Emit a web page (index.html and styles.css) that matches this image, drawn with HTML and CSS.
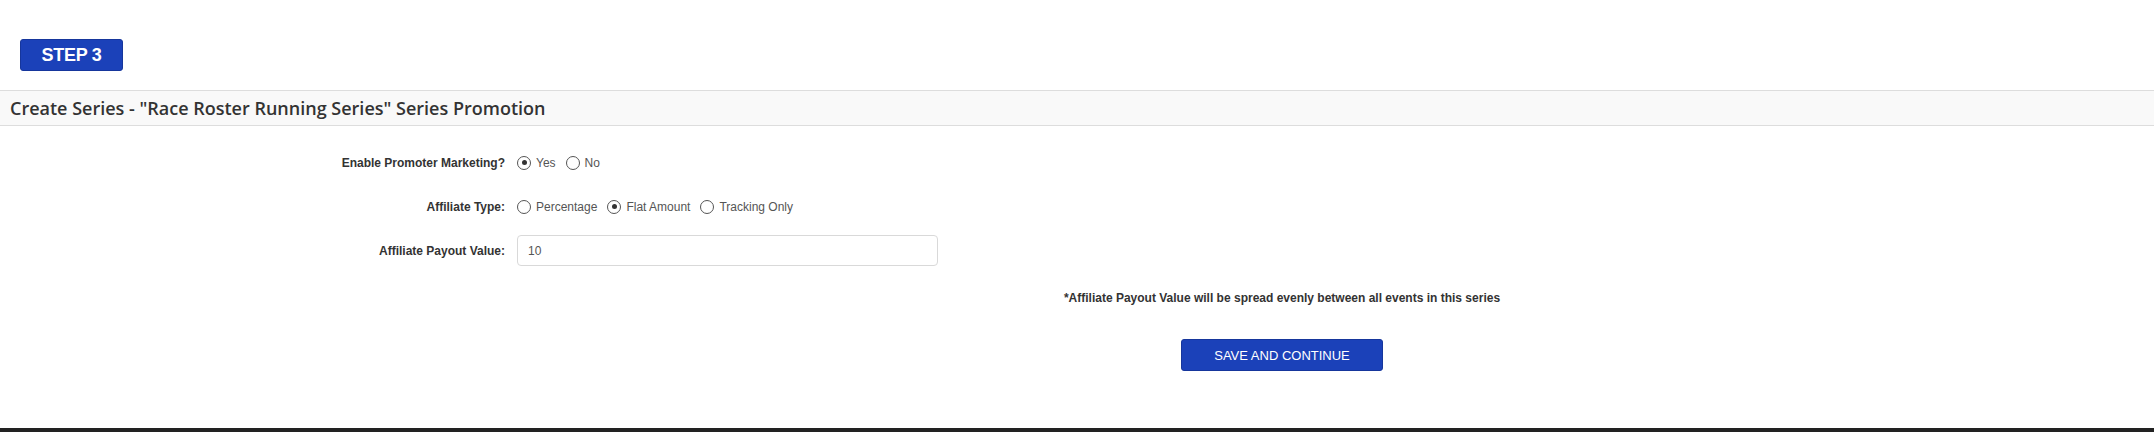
FILE: index.html
```html
<!DOCTYPE html>
<html lang="en">
<head>
<meta charset="utf-8">
<title>Create Series - Step 3</title>
<link rel="stylesheet" href="styles.css">
</head>
<body>
<div class="page">
  <div class="step-bar">
    <span class="step-badge">STEP 3</span>
  </div>
  <div class="section-head">
    <h2 class="section-title">Create Series - "Race Roster Running Series" Series Promotion</h2>
  </div>
  <form class="promo-form">
    <div class="form-row">
      <label class="form-label">Enable Promoter Marketing?</label>
      <div class="form-control-group">
        <label class="radio-opt"><span class="radio checked"></span>Yes</label>
        <label class="radio-opt"><span class="radio"></span>No</label>
      </div>
    </div>
    <div class="form-row">
      <label class="form-label">Affiliate Type:</label>
      <div class="form-control-group">
        <label class="radio-opt"><span class="radio"></span>Percentage</label>
        <label class="radio-opt"><span class="radio checked"></span>Flat Amount</label>
        <label class="radio-opt"><span class="radio"></span>Tracking Only</label>
      </div>
    </div>
    <div class="form-row">
      <label class="form-label">Affiliate Payout Value:</label>
      <div class="form-control-group">
        <div class="text-input">10</div>
      </div>
    </div>
    <div class="form-footer">
      <p class="note">*Affiliate Payout Value will be spread evenly between all events in this series</p>
      <button type="button" class="save-btn">SAVE AND CONTINUE</button>
    </div>
  </form>
</div>
<div class="footer-bar"></div>
</body>
</html>
```
FILE: styles.css
```css
html, body {
  margin: 0;
  padding: 0;
  background: #ffffff;
}

body {
  font-family: "Liberation Sans", Arial, sans-serif;
  color: #333333;
}

.page {
  height: 428px;
  background: #ffffff;
  overflow: hidden;
}

.step-bar {
  padding: 39px 0 0 20px;
  height: 52px;
  box-sizing: border-box;
}

.step-badge {
  display: inline-flex;
  align-items: center;
  justify-content: center;
  width: 103px;
  height: 32px;
  box-sizing: border-box;
  background: #1b41b9;
  border: 1px solid #16369c;
  border-radius: 3px;
  color: #ffffff;
  font-weight: bold;
  font-size: 18px;
  letter-spacing: -0.3px;
}

.section-head {
  margin-top: 38px;
  height: 36px;
  box-sizing: border-box;
  border-top: 1px solid #dddddd;
  border-bottom: 1px solid #dddddd;
  background: #f9f9f9;
  display: flex;
  align-items: center;
  padding-left: 10px;
}

.section-title {
  margin: 0;
  font-family: "Open Sans", "Liberation Sans", sans-serif;
  font-weight: 600;
  font-size: 18px;
  color: #333333;
}

.promo-form {
  padding-top: 21px;
  display: flex;
  flex-direction: column;
  gap: 13px;
}

.form-row {
  display: grid;
  grid-template-columns: 505px 1fr;
  column-gap: 12px;
  align-items: center;
  height: 31px;
}

.form-label {
  text-align: right;
  font-weight: bold;
  font-size: 12px;
  color: #333333;
}

.form-control-group {
  display: flex;
  align-items: center;
  gap: 10px;
}

.radio-opt {
  display: inline-flex;
  align-items: center;
  gap: 5px;
  font-size: 12px;
  color: #555555;
}

.radio {
  width: 14px;
  height: 14px;
  box-sizing: border-box;
  border: 1.5px solid #555555;
  border-radius: 50%;
  background: #ffffff;
  display: inline-flex;
  align-items: center;
  justify-content: center;
}

.radio.checked::after {
  content: "";
  width: 5px;
  height: 5px;
  border-radius: 50%;
  background: #333333;
}

.text-input {
  width: 421px;
  height: 31px;
  box-sizing: border-box;
  border: 1px solid #d9d9d9;
  border-radius: 4px;
  padding: 0 10px;
  display: flex;
  align-items: center;
  font-size: 12px;
  color: #555555;
}

.form-footer {
  padding-left: 410px;
  display: flex;
  flex-direction: column;
  align-items: center;
}

.note {
  margin: 12px 0 0 0;
  font-size: 12px;
  font-weight: bold;
  color: #333333;
}

.save-btn {
  margin-top: 34px;
  width: 202px;
  height: 32px;
  background: #1b41b9;
  border: 1px solid #16369c;
  border-radius: 3px;
  color: #ffffff;
  font-family: "Liberation Sans", Arial, sans-serif;
  font-size: 13px;
  padding: 0;
}

.footer-bar {
  height: 4px;
  background: #222222;
}
```
